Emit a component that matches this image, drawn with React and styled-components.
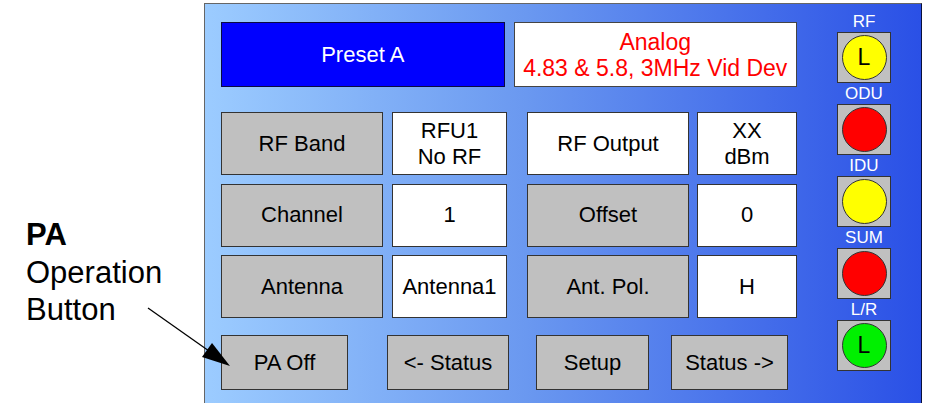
import React from 'react'
import styled, { createGlobalStyle } from 'styled-components'

const rows = [
  ['RF Band', 'RFU1\nNo RF', 'RF Output', 'XX\ndBm'],
  ['Channel', '1', 'Offset', '0'],
  ['Antenna', 'Antenna1', 'Ant. Pol.', 'H']
]

const bottomButtons = [
  { label: 'PA Off', w: 127, ml: 0 },
  { label: '<- Status', w: 122, ml: 39 },
  { label: 'Setup', w: 113, ml: 27 },
  { label: 'Status ->', w: 117, ml: 22 }
]

const lamps = [
  { name: 'RF', color: '#ffff00', letter: 'L' },
  { name: 'ODU', color: '#ff0000' },
  { name: 'IDU', color: '#ffff00' },
  { name: 'SUM', color: '#ff0000' },
  { name: 'L/R', color: '#00f000', letter: 'L' }
]

const Lines = ({ text }) =>
  text.split('\n').map((line, i) => <span key={i}>{line}</span>)

const App = () => (
  <>
    <GlobalStyle />
    <Page>
      <Note>
        <strong>PA</strong>
        <span>Operation</span>
        <span>Button</span>
      </Note>
      <Panel>
        <Main>
          <TopRow>
            <PresetBox>Preset A</PresetBox>
            <InfoBox>
              <span>Analog</span>
              <span>4.83 &amp; 5.8, 3MHz Vid Dev</span>
            </InfoBox>
          </TopRow>
          <Rows>
            {rows.map(([a, b, c, d]) => (
              <Row key={a}>
                <Pair gap={9}>
                  <Cell kind='button' w={162}>{a}</Cell>
                  <Cell w={115}><Lines text={b} /></Cell>
                </Pair>
                <Pair gap={8}>
                  <Cell kind={c === 'RF Output' ? 'value' : 'button'} w={162}>{c}</Cell>
                  <Cell w={100}><Lines text={d} /></Cell>
                </Pair>
              </Row>
            ))}
          </Rows>
          <BottomRow>
            {bottomButtons.map(b => (
              <BottomButton key={b.label} w={b.w} ml={b.ml}>{b.label}</BottomButton>
            ))}
          </BottomRow>
        </Main>
        <LampColumn>
          {lamps.map(l => (
            <Lamp key={l.name}>
              <LampLabel>{l.name}</LampLabel>
              <LampBox>
                <LampLight color={l.color}>{l.letter}</LampLight>
              </LampBox>
            </Lamp>
          ))}
        </LampColumn>
      </Panel>
      <Arrow width='100' height='80' viewBox='140 300 100 80'>
        <line x1='148' y1='308' x2='209' y2='351' stroke='#000' strokeWidth='1.3' />
        <polygon points='202,357 212,343 230,366' fill='#000' />
      </Arrow>
    </Page>
  </>
)

export default App

const GlobalStyle = createGlobalStyle`
  body {
    margin: 0;
    background: #fff;
    font-family: "Liberation Sans", Arial, sans-serif;
  }
`

const Page = styled.div`
  position: relative;
  display: flex;
  width: 930px;
  height: 409px;
  overflow: hidden;
`

const Note = styled.div`
  width: 204px;
  box-sizing: border-box;
  padding: 216px 0 0 26px;
  display: flex;
  flex-direction: column;
  font-size: 31px;
  line-height: 37.5px;
  color: #000;

  strong {
    font-weight: bold;
  }
`

const Panel = styled.div`
  margin-top: 3px;
  width: 718px;
  height: 400px;
  box-sizing: border-box;
  border: 1px solid #666;
  border-right-color: #0a0f3a;
  border-bottom: 0;
  background: linear-gradient(to right, #9cccff 0%, #6a98f0 45%, #2a50e6 100%);
  display: flex;
`

const Main = styled.div`
  padding: 18px 0 0 16px;
  display: flex;
  flex-direction: column;
`

const TopRow = styled.div`
  display: flex;
  gap: 9px;
  width: 576px;
  height: 65px;
`

const Box = styled.div`
  flex: 1;
  box-sizing: border-box;
  display: flex;
  flex-direction: column;
  align-items: center;
  justify-content: center;
  font-size: 22px;
  line-height: 26px;
`

const PresetBox = styled(Box)`
  background: #0000ff;
  border: 1px solid #0a0a40;
  color: #fff;
`

const InfoBox = styled(Box)`
  background: #fff;
  border: 1px solid #444;
  color: #ff0000;
  font-size: 23px;
  white-space: nowrap;
`

const Rows = styled.div`
  margin-top: 25px;
  display: flex;
  flex-direction: column;
  gap: 8.5px;
`

const Row = styled.div`
  display: flex;
  gap: 20px;
  height: 63px;
`

const Pair = styled.div`
  display: flex;
  gap: ${p => p.gap}px;
`

const Cell = styled.div`
  width: ${p => p.w}px;
  box-sizing: border-box;
  border: 1px solid #333;
  background: ${p => (p.kind === 'button' ? '#c0c0c0' : '#fff')};
  color: #000;
  display: flex;
  flex-direction: column;
  align-items: center;
  justify-content: center;
  font-size: 22px;
  line-height: 26px;
`

const BottomRow = styled.div`
  margin-top: 17px;
  display: flex;
  height: 55px;
`

const BottomButton = styled.div`
  width: ${p => p.w}px;
  margin-left: ${p => p.ml}px;
  box-sizing: border-box;
  border: 1px solid #333;
  background: #c0c0c0;
  color: #000;
  display: flex;
  align-items: center;
  justify-content: center;
  font-size: 22px;
`

const LampColumn = styled.div`
  margin-left: 40px;
  padding-top: 8px;
  display: flex;
  flex-direction: column;
  gap: 1px;
`

const Lamp = styled.div`
  width: 54px;
  display: flex;
  flex-direction: column;
  align-items: center;
`

const LampLabel = styled.div`
  height: 20px;
  line-height: 20px;
  font-size: 17px;
  color: #fff;
  white-space: nowrap;
`

const LampBox = styled.div`
  width: 54px;
  height: 51px;
  box-sizing: border-box;
  border: 1px solid #333;
  background: #c0c0c0;
  display: flex;
  align-items: center;
  justify-content: center;
`

const LampLight = styled.div`
  width: 45px;
  height: 45px;
  box-sizing: border-box;
  border-radius: 50%;
  border: 1px solid #333;
  background: ${p => p.color};
  display: flex;
  align-items: center;
  justify-content: center;
  font-size: 23px;
  color: #000;
`

const Arrow = styled.svg`
  position: absolute;
  left: 140px;
  top: 300px;
  overflow: visible;
`
